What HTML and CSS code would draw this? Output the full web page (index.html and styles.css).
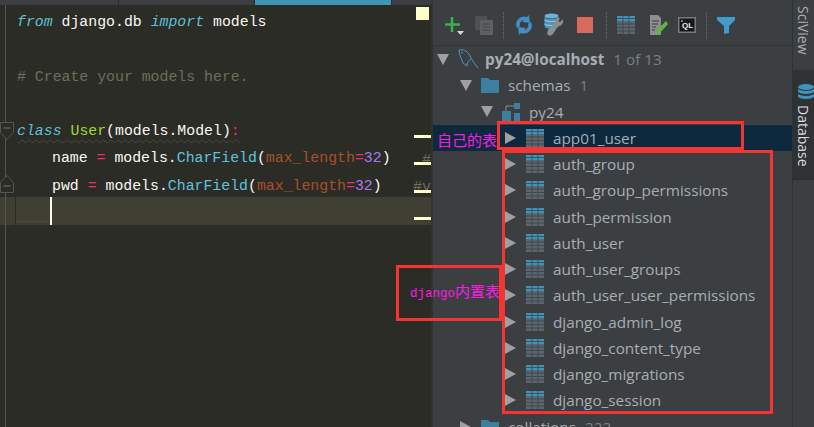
FILE: index.html
```html
<!DOCTYPE html>
<html>
<head>
<meta name="viewport" content="width=device-width, initial-scale=1">
<link rel="stylesheet" href="styles.css">
</head>
<body>

<svg class="defs" width="0" height="0">
  <symbol id="table" viewBox="0 0 18 18">
    <rect width="18" height="18" fill="#5a6670"/>
    <rect width="18" height="5" fill="#3f94bb"/>
    <path d="M0 2.500h18M6 0v18M12 0v18M0 8h18M0 11.500h18M0 15h18" stroke="#3c3f41" stroke-width="1" opacity=".75"/>
  </symbol>
  <symbol id="folder" viewBox="0 0 18 16">
    <path d="M0 1h7l2 2h9v13H0z" fill="#3d7f9f"/>
  </symbol>
</svg>

<div class="editor">
  <div class="tabs">
    <div class="tab tab-a"></div>
    <div class="tab tab-b"></div>
    <div class="tab tab-active"></div>
    <div class="tab tab-c"></div>
  </div>
  <div class="code">
    <div class="line"><span class="kw">from</span> django.db <span class="kw">import</span> models</div>
    <div class="line"></div>
    <div class="line"><span class="cm"># Create your models here.</span></div>
    <div class="line"></div>
    <div class="line"><svg class="fold" width="14" height="19" viewBox="0 0 14 19"><path d="M.5.5h13v10l-6.500 7-6.500-7z" fill="#2c2c27" stroke="#55564e"/><path d="M3.500 6h7" stroke="#77786f"/></svg><span class="squiggle"><span class="kw">class</span> <span class="nm">User</span>(models.Model)<span class="op">:</span></span></div>
    <div class="line indent">name <span class="op">=</span> models.<span class="fn">CharField</span>(<span class="ar">max_length</span><span class="op">=</span><span class="nb">32</span>)</div>
    <div class="line indent">pwd <span class="op">=</span> models.<span class="fn">CharField</span>(<span class="ar">max_length</span><span class="op">=</span><span class="nb">32</span>)<svg class="fold fold-up" width="14" height="19" viewBox="0 0 14 19"><path d="M.5 18.500h13v-10l-6.500-7-6.500 7z" fill="#2c2c27" stroke="#55564e"/><path d="M3.500 12h7" stroke="#77786f"/></svg></div>
    <div class="line current"><span class="caret"></span><span class="current-squiggle"></span></div>
  </div>
  <div class="note-hash one">#</div>
  <div class="note-hash two">#v</div>
  <div class="status-square"></div>
  <div class="stripe s1"></div>
  <div class="stripe s2"></div>
  <div class="stripe s3"></div>
  <div class="stripe s4"></div>
</div>

<div class="panel">
  <div class="toolbar">
    <svg width="22" height="24" viewBox="0 0 22 24"><path d="M9 4v15M2 11.500h15" stroke="#3fae4b" stroke-width="2.500"/><path d="M14 18h7l-3.500 4z" fill="#d8d8d8"/></svg>
    <svg width="18" height="20" viewBox="0 0 18 20"><rect y="1" width="12" height="14" fill="#4d5154"/><rect x="5" y="5" width="13" height="15" fill="#5c6063"/><path d="M8 9h7M8 12h7M8 15h7" stroke="#43474a"/></svg>
    <div class="sep"></div>
    <svg width="20" height="22" viewBox="0 0 20 22"><path d="M3 14A8 8 0 0 1 13 3l2-2 1 8-8-1 2-2A4.500 4.500 0 0 0 6 12z" fill="#3e8fc4"/><path d="M17 8a8 8 0 0 1-10 11l-2 2-1-8 8 1-2 2a4.500 4.500 0 0 0 4-6z" fill="#3e8fc4"/></svg>
    <svg width="20" height="24" viewBox="0 0 20 24"><ellipse cx="7.500" cy="3" rx="7" ry="2.500" fill="#6ab4dc"/><path d="M.5 3v10c0 2 3 3 7 3s7-1 7-3V3c0 2-3 3-7 3S.5 5 .5 3z" fill="#4d93bb"/><path d="M.5 7c2 2 12 2 14 0M.5 11c2 2 12 2 14 0" stroke="#a8d2e6" fill="none"/><path d="M19 6l-3 3-2-1 2-3c-3-1-5 1-5 4L4 17l-1 4 3 2 3-2 5-8c3 1 6-3 5-7z" fill="#8a8e90"/></svg>
    <svg width="22" height="22" viewBox="0 0 22 22"><rect x="3" y="3" width="16" height="16" fill="#d9695c"/></svg>
    <div class="sep"></div>
    <svg width="18" height="18" viewBox="0 0 18 18"><use href="#table"/></svg>
    <svg width="23" height="22" viewBox="0 0 23 22"><path d="M5 1h8l3 3v17H5z" fill="#8a8e90"/><path d="M7 7h7M7 10h6M7 13h4M7 16h3" stroke="#3c3f41"/><path d="M21 7l2 3-9 10-4 1 1-4z" fill="#62b543"/></svg>
    <svg width="18" height="16" viewBox="0 0 18 16"><rect width="18" height="16" fill="#77797b"/><rect x="1.500" y="1.500" width="15" height="13" fill="#17181a"/><text class="ql" x="9.500" y="11">QL</text><path d="M3 4h2" stroke="#ddd"/></svg>
    <div class="sep"></div>
    <svg width="18" height="18" viewBox="0 0 18 18"><path d="M0 1h18v3l-6 6v7l-5 1v-8L0 4z" fill="#3f9ccb"/></svg>
  </div>

  <div class="tree">
    <div class="row lv0">
      <span class="arrow down"></span>
      <svg class="ic" width="20" height="20" viewBox="0 0 20 20"><path d="M1 1C5 0 9 2 11 5c2 4 4 8 9 14M1 1c0 4 2 8 4 13 1 1 3 2 4 3 0-3 1-5 4-7M3 3l2 1" fill="none" stroke="#4a9cc0" stroke-width="1"/></svg>
      <span class="name bold">py24@localhost</span><span class="count">1 of 13</span>
    </div>
    <div class="row lv1">
      <span class="arrow down"></span>
      <svg class="ic" width="18" height="16"><use href="#folder"/></svg>
      <span class="name">schemas</span><span class="count">1</span>
    </div>
    <div class="row lv2">
      <span class="arrow down"></span>
      <svg class="ic" width="18" height="18" viewBox="0 0 18 18"><rect x="12" y="0" width="6" height="6" fill="#3d7f9f"/><rect x="0" y="8" width="9" height="10" fill="#3d7f9f"/><rect x="12" y="10" width="6" height="8" fill="#3d7f9f"/><path d="M4 8V3h8" stroke="#8a8e90" fill="none"/></svg>
      <span class="name">py24</span>
    </div>
    <div class="row lv3 selected"><span class="arrow"></span><svg class="ic" width="18" height="18"><use href="#table"/></svg><span class="name">app01_user</span></div>
    <div class="row lv3"><span class="arrow"></span><svg class="ic" width="18" height="18"><use href="#table"/></svg><span class="name">auth_group</span></div>
    <div class="row lv3"><span class="arrow"></span><svg class="ic" width="18" height="18"><use href="#table"/></svg><span class="name">auth_group_permissions</span></div>
    <div class="row lv3"><span class="arrow"></span><svg class="ic" width="18" height="18"><use href="#table"/></svg><span class="name">auth_permission</span></div>
    <div class="row lv3"><span class="arrow"></span><svg class="ic" width="18" height="18"><use href="#table"/></svg><span class="name">auth_user</span></div>
    <div class="row lv3"><span class="arrow"></span><svg class="ic" width="18" height="18"><use href="#table"/></svg><span class="name">auth_user_groups</span></div>
    <div class="row lv3"><span class="arrow"></span><svg class="ic" width="18" height="18"><use href="#table"/></svg><span class="name">auth_user_user_permissions</span></div>
    <div class="row lv3"><span class="arrow"></span><svg class="ic" width="18" height="18"><use href="#table"/></svg><span class="name">django_admin_log</span></div>
    <div class="row lv3"><span class="arrow"></span><svg class="ic" width="18" height="18"><use href="#table"/></svg><span class="name">django_content_type</span></div>
    <div class="row lv3"><span class="arrow"></span><svg class="ic" width="18" height="18"><use href="#table"/></svg><span class="name">django_migrations</span></div>
    <div class="row lv3"><span class="arrow"></span><svg class="ic" width="18" height="18"><use href="#table"/></svg><span class="name">django_session</span></div>
    <div class="row lv1"><span class="arrow"></span><svg class="ic" width="18" height="16"><use href="#folder"/></svg><span class="name">collations</span><span class="count">222</span></div>
  </div>
</div>

<div class="sidebar">
  <div class="side-tab sciview"><span class="side-label">SciView</span></div>
  <div class="side-tab database">
    <svg class="db-icon" width="16" height="16" viewBox="0 0 16 16"><ellipse cx="8" cy="3" rx="8" ry="3" fill="#3f94bb"/><path d="M0 5c3 2.500 13 2.500 16 0v3c-3 2.500-13 2.500-16 0zM0 10c3 2.500 13 2.500 16 0v3c-3 2.500-13 2.500-16 0z" fill="#3f94bb"/></svg>
    <span class="side-label">Database</span>
  </div>
</div>

<!-- red marks drawn over the screenshot -->
<div class="mark mark-own"></div>
<div class="mark mark-builtin"></div>
<div class="mark mark-label"></div>
<div class="pink pink-own">自己的表</div>
<div class="pink pink-builtin"><span class="pink-mono">django</span>内置表</div>

</body>
</html>
```
FILE: styles.css
```css
* {box-sizing: border-box}

html, body {
  height: 100%;
  margin: 0;
  overflow: hidden;
}

body {
  display: flex;
  position: relative;
  width: 814px;
  height: 427px;
  background-color: #3c3f41;
  font-family: "Open Sans", sans-serif;
}

.defs {
  position: absolute;
}

/* Editor */
.editor {
  position: relative;
  flex: none;
  width: 433px;
  height: 100%;
  background-color: #2c2c27;
  border-right: 2px solid #2f3133;
}

.tabs {
  display: flex;
  height: 5px;
  background-color: #3c3f41;
}

.tab {
  border-right: 1px solid #2b2d2e;
}

.tab-a {width: 119px;}
.tab-b {width: 136px;}
.tab-active {width: 136px; background-color: #3f95b5; border-right: none;}
.tab-c {flex: 1; border-left: 1px solid #2b2d2e; border-right: none;}

.code {
  position: relative;
  height: 422px;
  padding-top: 4px;
  font-family: "Liberation Mono", monospace;
  font-size: 14.850px;
  color: #f8f8f2;
  background: linear-gradient(#55564e, #55564e) 5px 0 / 1px 100% no-repeat;
}

.line {
  position: relative;
  height: 27.300px;
  line-height: 27px;
  padding-left: 17px;
  white-space: pre;
}

.indent {padding-left: 52px;}

/* line with the caret, the band runs under the gutter too */
.current {
  height: 28px;
  margin-top: -3px;
  background:
    linear-gradient(#55564e, #55564e) 5px 0 / 1px 100% no-repeat,
    linear-gradient(#2c2c27, #2c2c27) 15px 0 / 1px 100% no-repeat,
    #3f3f33;
}

.caret {
  position: absolute;
  left: 50px;
  top: 0;
  width: 2px;
  height: 28px;
  background-color: #f8f8f2;
}

.current-squiggle {
  position: absolute;
  left: 17px;
  bottom: 3px;
  width: 31px;
  height: 2px;
  border-bottom: 1px dotted #5a5a4c;
}

.kw {color: #5fbfd6; font-style: italic;}
.cm {color: #6f6d5a;}
.nm {color: #a0d92a;}
.op {color: #f92672;}
.fn {color: #5fc3dd;}
.ar {color: #a8502a;}
.nb {color: #a57bea;}

.squiggle {
  text-decoration: underline wavy #47473e 1px;
  text-underline-offset: 4px;
}

.fold {
  position: absolute;
  left: 0;
  top: 4px;
}

.fold-up {
  top: 1px;
}

.note-hash {
  position: absolute;
  font-family: "Liberation Mono", monospace;
  font-size: 15px;
  color: #6f6d5a;
}

.note-hash.one {left: 422px; top: 152px;}
.note-hash.two {left: 413px; top: 179px;}

.status-square {
  position: absolute;
  left: 416px;
  top: 7px;
  width: 13px;
  height: 13px;
  background-color: #ffffcc;
}

.stripe {
  position: absolute;
  left: 414px;
  width: 17px;
  height: 3px;
  background-color: #ffffcc;
}

.s1 {top: 135px;}
.s2 {top: 162px;}
.s3 {top: 190px;}
.s4 {top: 217px;}

/* Database panel */
.panel {
  flex: 1;
  min-width: 0;
}

.toolbar {
  display: flex;
  align-items: center;
  gap: 10px;
  height: 46px;
  padding: 5px 0 0 10px;
  border-bottom: 1px solid #323436;
}

.sep {
  width: 1px;
  height: 27px;
  border-left: 1px dotted #6d7174;
}

.ql {
  font-family: "Liberation Sans", sans-serif;
  font-size: 8px;
  font-weight: bold;
  fill: #eeeeee;
  text-anchor: middle;
}

.row {
  display: flex;
  align-items: center;
  height: 26.250px;
  font-size: 15.300px;
  color: #a6aeb4;
  white-space: nowrap;
}

.lv0 {padding-left: 4px;}
.lv1 {padding-left: 27px;}
.lv2 {padding-left: 48px;}
.lv3 {padding-left: 72px;}

.selected {background-color: #0d293e;}

.arrow {
  flex: none;
  width: 0;
  height: 0;
  margin-right: 10px;
  border-style: solid;
  border-width: 6px 0 6px 11px;
  border-color: transparent transparent transparent #a0a0a0;
}

.arrow.down {
  border-width: 11px 6px 0 6px;
  border-color: #a0a0a0 transparent transparent transparent;
  margin-right: 9px;
}

.ic {
  flex: none;
  margin-right: 9px;
}

.lv0 .ic {margin-right: 7px;}

.bold {font-weight: bold;}

.count {
  margin-left: 9px;
  color: #787f84;
}

/* Right tool strip */
.sidebar {
  flex: none;
  width: 22px;
  border-left: 1px solid #2f3133;
}

.side-tab {
  display: flex;
  flex-direction: column;
  align-items: center;
  width: 100%;
}

.sciview {height: 70px; padding-top: 6px;}

.database {
  height: 110px;
  padding-top: 14px;
  gap: 5px;
  background-color: #2f3234;
  border-bottom: 1px solid #2a2c2e;
}

.db-icon {align-self: flex-end;}

.side-label {
  writing-mode: vertical-rl;
  font-size: 14px;
  color: #a6aeb4;
}

.database .side-label {color: #d8dadc;}

/* Annotations */
.mark {
  position: absolute;
  border: 3px solid #f73434;
}

.mark-own {left: 497px; top: 121px; width: 247px; height: 29px;}
.mark-builtin {left: 502px; top: 150px; width: 271px; height: 264px;}
.mark-label {left: 396px; top: 265px; width: 106px; height: 56px;}

.pink {
  position: absolute;
  font-family: "Noto Sans CJK SC", sans-serif;
  font-size: 15px;
  line-height: 20px;
  color: #ff19e6;
  white-space: nowrap;
}

.pink-own {left: 437px; top: 130px;}
.pink-builtin {left: 410px; top: 281px;}
.pink-mono {font-family: "Liberation Mono", monospace; font-size: 12.500px;}
```
